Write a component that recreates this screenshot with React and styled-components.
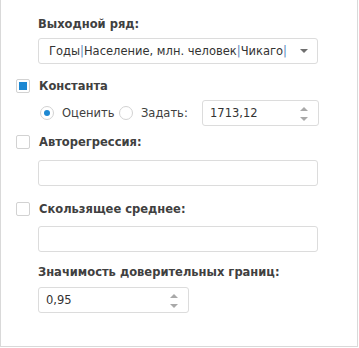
import React from 'react';
import styled, { createGlobalStyle } from 'styled-components';

const Global = createGlobalStyle`
  html, body {
    margin: 0;
    padding: 0;
    background: #ffffff;
  }
  body {
    font-family: Tahoma, "DejaVu Sans", "Noto Sans", sans-serif;
    font-size: 11.5px;
    color: #404040;
  }
`;

const Panel = styled.div`
  box-sizing: border-box;
  width: 358px;
  height: 347px;
  border: 1px solid #d9d9d9;
  border-top: none;
  padding: 16px 0 0 0;
  display: flex;
  flex-direction: column;
`;

const Indent = styled.div`
  display: flex;
  flex-direction: column;
  padding-left: ${p => p.$left || 37}px;
  margin-top: ${p => p.$top || 0}px;
`;

const Label = styled.div`
  height: 17px;
  line-height: 17px;
  font-weight: bold;
  color: #404040;
  white-space: nowrap;
`;

const Box = styled.div`
  box-sizing: border-box;
  position: relative;
  flex: none;
  width: ${p => p.$width}px;
  height: 26px;
  margin-top: ${p => p.$top || 0}px;
  border: 1px solid #dcdcdc;
  border-radius: 3px;
  background: #fff;
  display: flex;
  align-items: center;
  padding: 0 0 0 ${p => p.$pad || 10}px;
  color: #333;
  white-space: nowrap;
  overflow: hidden;
`;

const Sep = styled.span`
  color: #5a88bd;
`;

const DropArrow = styled.span`
  position: absolute;
  right: 9px;
  top: 10px;
  width: 0;
  height: 0;
  border-left: 4px solid transparent;
  border-right: 4px solid transparent;
  border-top: 4px solid #6f6f6f;
`;

const Spinner = styled.span`
  position: absolute;
  right: 10px;
  top: 6px;
  display: flex;
  flex-direction: column;
  gap: 6px;
`;

const Tri = styled.span`
  width: 0;
  height: 0;
  border-left: 4px solid transparent;
  border-right: 4px solid transparent;
  ${p => (p.$up ? 'border-bottom: 4px solid #a9a9a9;' : 'border-top: 4px solid #a9a9a9;')}
`;

const CheckRow = styled.label`
  display: flex;
  align-items: center;
  height: 16px;
  padding-left: 15px;
  margin-top: ${p => p.$top || 0}px;
  gap: 9px;
`;

const CheckBox = styled.span`
  box-sizing: border-box;
  width: 14px;
  height: 14px;
  border: 1px solid #d2d2d2;
  border-radius: 2px;
  background: #fff;
  display: flex;
  align-items: center;
  justify-content: center;

  &::after {
    content: '';
    width: 8px;
    height: 8px;
    background: ${p => (p.$checked ? '#1d88d2' : 'transparent')};
  }
`;

const RadioRow = styled.div`
  display: flex;
  align-items: center;
  padding-left: 39px;
  margin-top: ${p => p.$top || 0}px;
`;

const RadioItem = styled.span`
  display: flex;
  align-items: center;
  flex: none;
  gap: 8px;
  width: ${p => p.$width}px;
  color: #404040;
`;

const Radio = styled.span`
  box-sizing: border-box;
  width: 14px;
  height: 14px;
  border: 1px solid #d2d2d2;
  border-radius: 50%;
  background: #fff;
  display: flex;
  align-items: center;
  justify-content: center;

  &::after {
    content: '';
    width: 6px;
    height: 6px;
    border-radius: 50%;
    background: ${p => (p.$checked ? '#1d88d2' : 'transparent')};
  }
`;

const NumberBox = ({ value, width, top }) => (
  <Box $width={width} $top={top} $pad={7}>
    {value}
    <Spinner>
      <Tri $up />
      <Tri />
    </Spinner>
  </Box>
);

export default function App() {
  return (
    <>
      <Global />
      <Panel>
        <Indent>
          <Label>Выходной ряд:</Label>
          <Box $width={280} $top={5}>
            Годы<Sep>|</Sep>Население, млн. человек<Sep>|</Sep>Чикаго<Sep>|</Sep>
            <DropArrow />
          </Box>
        </Indent>

        <CheckRow $top={14}>
          <CheckBox $checked />
          <Label as="span">Константа</Label>
        </CheckRow>

        <RadioRow $top={6}>
          <RadioItem $width={79}>
            <Radio $checked />
            Оценить
          </RadioItem>
          <RadioItem $width={83}>
            <Radio />
            Задать:
          </RadioItem>
          <NumberBox value="1713,12" width={117} />
        </RadioRow>

        <CheckRow $top={8}>
          <CheckBox />
          <Label as="span">Авторегрессия:</Label>
        </CheckRow>
        <Indent $top={10}>
          <Box $width={280} />
        </Indent>

        <CheckRow $top={15}>
          <CheckBox />
          <Label as="span">Скользящее среднее:</Label>
        </CheckRow>
        <Indent $top={9}>
          <Box $width={280} />
        </Indent>

        <Indent $top={12}>
          <Label>Значимость доверительных границ:</Label>
          <NumberBox value="0,95" width={151} top={6} />
        </Indent>
      </Panel>
    </>
  );
}
